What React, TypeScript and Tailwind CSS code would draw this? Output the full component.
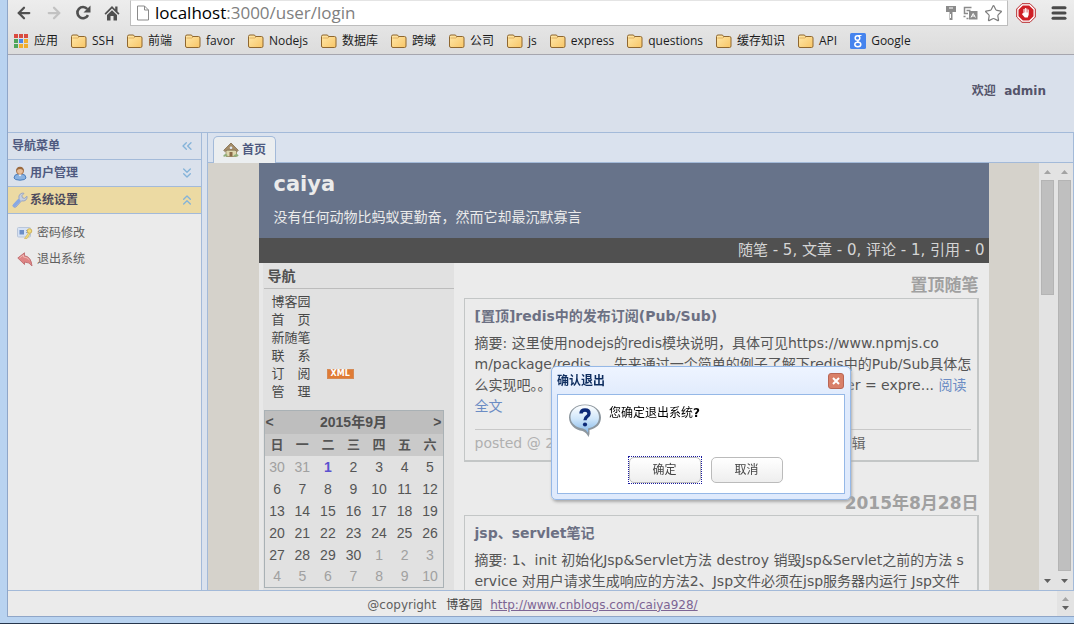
import type { ReactNode } from 'react'
import { ArrowLeft, ArrowRight, ChevronsDown, ChevronsLeft, ChevronsUp, Menu, Star } from 'lucide-react'

const bookmarks = ['SSH', '前端', 'favor', 'Nodejs', '数据库', '跨域', '公司', 'js', 'express', 'questions', '缓存知识', 'API']

const blogLinks = ['博客园', '首　页', '新随笔', '联　系', '订　阅', '管　理']

const weekdays = ['日', '一', '二', '三', '四', '五', '六']

// September 2015, padded with the neighbouring months
const weeks = [
    [30, 31, 1, 2, 3, 4, 5],
    [6, 7, 8, 9, 10, 11, 12],
    [13, 14, 15, 16, 17, 18, 19],
    [20, 21, 22, 23, 24, 25, 26],
    [27, 28, 29, 30, 1, 2, 3],
    [4, 5, 6, 7, 8, 9, 10],
]

function FolderIcon() {
    return (
        <svg width="16" height="14" viewBox="0 0 16 14" className="shrink-0">
            <defs>
                <linearGradient id="folder" x1="0" y1="0" x2="1" y2="1">
                    <stop offset="0" stopColor="#ffe9ab" />
                    <stop offset="1" stopColor="#f8c566" />
                </linearGradient>
            </defs>
            <path d="M.5 12V2.5Q.5 1 2 1h4.500l1 1.500H13.500Q15 2.500 15 4v8q0 1.500-1.500 1.500H2Q.5 13.500.5 12z" fill="url(#folder)" stroke="#8f672f" />
            <path d="M1.500 4h5.500l1-1" fill="none" stroke="#e0b060" />
        </svg>
    )
}

function AppsIcon() {
    const colors = ['#d94b3f', '#d94b3f', '#d94b3f', '#4fa65a', '#4a86e8', '#f0ae2e', '#4fa65a', '#f0ae2e', '#f0ae2e']
    return (
        <svg width="14" height="14" viewBox="0 0 14 14" className="shrink-0">
            {colors.map((c, i) => (
                <rect key={i} x={(i % 3) * 5} y={Math.floor(i / 3) * 5} width="4" height="4" fill={c} />
            ))}
        </svg>
    )
}

function ReloadIcon() {
    return (
        <svg width="17" height="16" viewBox="0 0 17 16">
            <path d="M13 10.200A5.600 5.600 0 1 1 12.300 4" fill="none" stroke="#505050" strokeWidth="2.600" />
            <path d="M15.500.5v7h-7z" fill="#505050" />
        </svg>
    )
}

function HomeIcon() {
    return (
        <svg width="16" height="16" viewBox="0 0 16 16" fill="#505050">
            <path d="M8 1 .5 8.500l1.200 1.200L8 3.600l6.300 6.100 1.200-1.200-2-2V1.500h-2.300v2.700z" />
            <path d="M3 10 8 5.200 13 10v5.500H9.500V11h-3v4.500H3z" />
        </svg>
    )
}

function PageIcon() {
    return (
        <svg width="12" height="16" viewBox="0 0 12 16">
            <path d="M.5 1h7l4 4v10H.5z" fill="#fff" stroke="#8a8a8a" />
            <path d="M7.500 1v4h4" fill="none" stroke="#8a8a8a" />
        </svg>
    )
}

function KeyIcon() {
    return (
        <svg width="12" height="16" viewBox="0 0 12 16">
            <path d="M1 1h10v6H7.500v8h-3V7H1z" fill="#8b8b8b" />
            <path d="M4 3h4M5.500 9v4" stroke="#fff" />
        </svg>
    )
}

function TranslateIcon() {
    return (
        <svg width="15" height="14" viewBox="0 0 15 14" fill="none" stroke="#8b8b8b">
            <path d="M8.500 1.500H1.500v6H5M3.500 4.500h4" strokeWidth="1.500" />
            <path d="M.5 10.500h2M3.500 12.500h2" strokeWidth="1.500" />
            <rect x="6.500" y="5.500" width="7.500" height="7.500" fill="#8b8b8b" />
            <path d="m8 11.500 2.200-4 2.200 4M9 10h2.600" stroke="#fff" />
        </svg>
    )
}

function AdblockIcon() {
    return (
        <svg width="20" height="20" viewBox="0 0 20 20">
            <path d="M6 .7h8L19.300 6v8L14 19.300H6L.7 14V6z" fill="#fff" stroke="#b8272b" />
            <path d="M6.800 2.500h6.400l4.300 4.300v6.400l-4.300 4.300H6.800l-4.300-4.300V6.800z" fill="#cf1f26" />
            <path d="M7.500 10V6h1v3.500h.4V5h1v4.500h.4V5.500h1v4h.4V6.500h1v5.200l-1 2.800H8.800L6 11.200l.6-1z" fill="#fff" />
        </svg>
    )
}

function GoogleIcon() {
    return (
        <svg width="16" height="16" viewBox="0 0 16 16" className="shrink-0">
            <rect width="16" height="16" rx="1.500" fill="#4684ee" />
            <circle cx="7.500" cy="5" r="2.300" fill="none" stroke="#fff" strokeWidth="1.500" />
            <ellipse cx="7.800" cy="11.500" rx="3" ry="2.200" fill="none" stroke="#fff" strokeWidth="1.500" />
            <path d="M8 2.500h3.500M8.500 7l-1 1.300 1.500 1.200" fill="none" stroke="#fff" strokeWidth="1.200" />
        </svg>
    )
}

function UserIcon() {
    return (
        <svg width="14" height="15" viewBox="0 0 14 15">
            <path d="M1 12q0-3.500 4-4h4q4 .5 4 4-.5 2-6 2.200Q1.500 14 1 12z" fill="#89b2e2" stroke="#4c7fbd" />
            <circle cx="7" cy="5" r="3.500" fill="#e8bd97" stroke="#a7744d" />
            <path d="M3.200 5Q3 1 7 .8 11 1 10.800 5 9.500 3 7 3T3.200 5z" fill="#9b6a3e" />
            <path d="m5.500 8.500 1.500 2 1.500-2z" fill="#fff" />
        </svg>
    )
}

function WrenchIcon() {
    return (
        <svg width="16" height="16" viewBox="0 0 16 16">
            <path d="M1 13.500 7 7q-.8-3.500 1.500-5.200Q10 .7 12 1.300L9.800 3.800l.7 2 2.200.6L15 4.200q.5 2-1 3.700-1.600 1.600-4.500 1L4 15q-1.500.8-2.500-.2Q.7 14 1 13.500z" fill="#c6d0e2" stroke="#9aa5c0" />
            <path d="m2.500 13.400 4.300-4.600" stroke="#88a8e2" strokeWidth="3.500" strokeLinecap="round" />
        </svg>
    )
}

function CardIcon() {
    return (
        <svg width="16" height="14" viewBox="0 0 16 14">
            <rect x=".5" y="1.500" width="13" height="9.500" rx="1" fill="#d6e2f4" stroke="#b9c6da" />
            <rect x="2.500" y="4" width="4.500" height="4.500" fill="#6c8fc8" />
            <path d="M9 4.500h3M9 6.500h3" stroke="#8fa4c6" />
            <circle cx="12.500" cy="5" r="2.300" fill="#f2dc7c" stroke="#d0b45a" />
            <path d="m11.500 7-4 5.500h2.500L13 8z" fill="#f2dc7c" stroke="#d0b45a" strokeWidth=".7" />
        </svg>
    )
}

function ExitIcon() {
    return (
        <svg width="16" height="15" viewBox="0 0 16 15">
            <path d="M.8 6 7.500.8v3Q14 4.500 15 14q-2.500-4-7.500-4v2.500z" fill="#df8484" stroke="#c27376" />
            <path d="m2.500 6 4-3v2q4 .3 6 3" fill="none" stroke="#efb4b0" />
        </svg>
    )
}

function HouseIcon() {
    return (
        <svg width="16" height="16" viewBox="0 0 16 16">
            <path d="M3 8h10.500v6.500H3z" fill="#ddd6ae" stroke="#a59a71" />
            <path d="M8 1 .8 8.300l1 1.200L4 8h8l2.200 1.500 1-1.200z" fill="#a58d68" stroke="#8c7a5e" />
            <path d="M6.500 14.500V10h3v4.500z" fill="#8a6a48" />
            <path d="M1 14.500q1-2.500 3-.5M11 14.500q2-2.500 4-.5" stroke="#8fae7c" strokeWidth="2" fill="none" />
            <circle cx="8" cy="5.800" r="1.300" fill="#dfe9f5" />
        </svg>
    )
}

function QuestionIcon() {
    return (
        <svg width="34" height="35" viewBox="0 0 34 35">
            <defs>
                <linearGradient id="bubble" x1="0" y1="0" x2="0" y2="1">
                    <stop offset="0" stopColor="#ffffff" />
                    <stop offset="0.5" stopColor="#cfe6fa" />
                    <stop offset="1" stopColor="#86b8e8" />
                </linearGradient>
            </defs>
            <path d="M17 1.500C7 1.500 1 7.500 1 14.500S7 27 14.500 28Q18.500 29.500 20.500 34q1.500-3.500 1-7c7-1.500 11.500-6 11.500-12.500C33 7.500 27 1.500 17 1.500z" fill="#8d979f" />
            <path d="M17 2.200C8 2.200 2.500 7.500 2.500 14s5.500 10.600 12.500 11.600q3.500.8 4.800 4.200.8-2 .2-4.400c7-1 11-5.300 11-11.300C31 7.500 26 2.200 17 2.200z" fill="url(#bubble)" />
            <path d="M13 10.500Q13 7 17 7t4 3.400q0 1.900-2 3.200T17 17.300" fill="none" stroke="#0d2a78" strokeWidth="3.400" />
            <circle cx="17" cy="21.500" r="2.100" fill="#0d2a78" />
        </svg>
    )
}

function ScrollArrow({ down }: { down?: boolean }) {
    return (
        <svg width="7" height="4" viewBox="0 0 7 4" className="shrink-0">
            <path d={down ? 'M0 0h7L3.500 4z' : 'M0 4h7L3.500 0z'} fill={down ? '#606060' : '#a3a3a3'} />
        </svg>
    )
}

function Scrollbar({ children }: { children?: ReactNode }) {
    return (
        <div className="flex w-[17px] shrink-0 flex-col items-center bg-[#e3e3e3] pt-[7px] pb-[7px]">
            <ScrollArrow />
            <div className="mt-1.5 mb-2 flex w-full flex-1 flex-col px-0.5">{children}</div>
            <ScrollArrow down />
        </div>
    )
}

function BrowserChrome() {
    return (
        <header className="shrink-0 border-b border-[#a6a6ae] bg-gradient-to-b from-[#ededed] to-[#dcdcdc] font-['Open_Sans','Noto_Sans_CJK_SC',sans-serif]">
            <div className="flex h-[26px] items-center">
                <div className="flex w-[122px] items-center gap-3 pl-[7px]">
                    <button aria-label="Back"><ArrowLeft className="h-[18px] w-[18px] text-[#505050]" strokeWidth={3} /></button>
                    <button aria-label="Forward"><ArrowRight className="h-[18px] w-[18px] text-[#c2c2c2]" strokeWidth={3} /></button>
                    <button aria-label="Reload"><ReloadIcon /></button>
                    <button aria-label="Home"><HomeIcon /></button>
                </div>
                <div className="flex h-full flex-1 items-center gap-1.5 border border-t-[#e4e4e4] border-[#bdbdbd] bg-white pr-1 pl-1.5">
                    <PageIcon />
                    <div className="flex-1 text-[17px] leading-6 text-[#808080]">
                        <span className="text-black">localhost</span>:3000/user/login
                    </div>
                    <KeyIcon />
                    <TranslateIcon />
                    <Star className="h-[19px] w-[19px] text-[#7d7d7d]" strokeWidth={1.5} />
                </div>
                <div className="flex items-center gap-3.5 pr-1.5 pl-2">
                    <button aria-label="AdBlock"><AdblockIcon /></button>
                    <button aria-label="Menu"><Menu className="h-[18px] w-[18px] text-[#4a4a4a]" strokeWidth={4} /></button>
                </div>
            </div>
            <nav className="flex h-7 items-center gap-[13px] pt-0.5 pl-1.5 text-[12px] leading-4 text-[#1c1c1c]">
                <a href="#" className="flex items-center gap-1.5"><AppsIcon />应用</a>
                {bookmarks.map((name) => (
                    <a key={name} href="#" className="flex items-center gap-[5px] whitespace-nowrap"><FolderIcon />{name}</a>
                ))}
                <a href="#" className="flex items-center gap-[5px]"><GoogleIcon />Google</a>
            </nav>
        </header>
    )
}

function Sidebar() {
    return (
        <aside className="flex w-[194px] shrink-0 flex-col border-r border-[#a3bad9] bg-[#ebebeb] text-[12px] leading-4">
            <div className="flex h-[27px] items-center justify-between border-b border-[#a3bad9] bg-[#dae1ec] pr-1.5 pl-1 font-bold text-[#4f5a80]">
                导航菜单
                <ChevronsLeft className="h-4 w-4 text-[#84b3d9]" strokeWidth={2} />
            </div>
            <button className="flex h-[27px] items-center border-b border-[#a3bad9] bg-[#dae1ec] pr-1.5 pl-[5px] text-left font-bold text-[#4f5a80]">
                <UserIcon />
                <span className="ml-[3px] flex-1">用户管理</span>
                <ChevronsDown className="h-4 w-4 text-[#84b3d9]" strokeWidth={2} />
            </button>
            <button className="flex h-[27px] items-center border-b border-[#a3bad9] bg-[#ecdaa3] pr-1.5 pl-1 text-left font-bold text-[#4c4a5c]">
                <WrenchIcon />
                <span className="ml-0.5 flex-1">系统设置</span>
                <ChevronsUp className="h-4 w-4 text-[#84b3d9]" strokeWidth={2} />
            </button>
            <ul className="pt-1.5 pl-[9px] text-[#606060]">
                <li><a href="#" className="flex h-[26px] items-center gap-1"><CardIcon />密码修改</a></li>
                <li><a href="#" className="flex h-[26px] items-center gap-1"><ExitIcon />退出系统</a></li>
            </ul>
        </aside>
    )
}

function Calendar() {
    return (
        <table className="mt-[9px] w-[180px] table-fixed border border-[#a9b1b5] text-center font-['Liberation_Sans','Noto_Sans_CJK_SC',sans-serif] text-[14px] leading-5 text-[#555]">
            <thead>
                <tr className="h-[23px] bg-[#bebebe] text-[#505050]">
                    <th className="pl-px text-left"><a href="#">&lt;</a></th>
                    <th colSpan={5}>2015年9月</th>
                    <th className="pr-px text-right"><a href="#">&gt;</a></th>
                </tr>
                <tr className="h-[22px] bg-[#cacaca] text-[13px]">
                    {weekdays.map((d) => <th key={d}>{d}</th>)}
                </tr>
            </thead>
            <tbody>
                {weeks.map((week, w) => (
                    <tr key={w} className="h-[22px]">
                        {week.map((day, i) => {
                            const other = (w === 0 && day > 7) || (w > 3 && day < 15)
                            const today = w === 0 && day === 1
                            return (
                                <td key={i} className={today ? 'font-bold text-[#5b51cf]' : other ? 'text-[#a0a0a0]' : ''}>{day}</td>
                            )
                        })}
                    </tr>
                ))}
            </tbody>
        </table>
    )
}

function Blog() {
    return (
        <div className="flex w-[730px] flex-col bg-[#ebebeb] text-[14px]">
            <div className="h-[75px] shrink-0 bg-[#67738a] px-[15px] pt-[5px] text-[#ebebeb]">
                <h1 className="text-[21px] leading-8 font-bold">caiya</h1>
                <p className="mt-[7px] leading-5">没有任何动物比蚂蚁更勤奋，然而它却最沉默寡言</p>
            </div>
            <div className="h-[25px] shrink-0 bg-[#505050] pr-1 text-right text-[15px] leading-[25px] text-[#d5d5d5]">
                随笔 - 5, 文章 - 0, 评论 - 1, 引用 - 0
            </div>
            <div className="flex min-h-0 flex-1">
                <div className="w-[195px] shrink-0 border-l-4 border-[#e8e8e8] bg-[#e1e1e1] pl-px">
                    <h2 className="h-[26px] border-b border-[#bcbcbc] pl-1 leading-[26px] font-bold text-[#505050]">导航</h2>
                    <ul className="mt-1 pl-2 text-[13px] text-[#484848]">
                        {blogLinks.map((name) => (
                            <li key={name} className="flex h-[18px] items-center gap-4">
                                <a href="#">{name}</a>
                                {name === '订　阅' && (
                                    <span className="border border-[#d58a55] bg-[#e07b35] px-[3px] text-[8px] leading-2 font-bold text-white">XML</span>
                                )}
                            </li>
                        ))}
                    </ul>
                    <Calendar />
                </div>
                <div className="min-w-0 flex-1 pr-2.5 pl-2.5 whitespace-nowrap text-[#555]">
                    <h2 className="h-[35px] pt-2.5 text-right text-[17px] leading-6 font-bold text-[#a0a0a0]">置顶随笔</h2>
                    <article className="h-[164px] border border-r-2 border-b-2 border-[#c3c6c6] pt-[5px] pr-1.5 pl-2.5">
                        <h3 className="leading-6 font-bold text-[#6c7083]">[置顶]redis中的发布订阅(Pub/Sub)</h3>
                        <div className="mt-[5px] leading-[21px]">
                            <p>摘要: 这里使用nodejs的redis模块说明，具体可见https://www.npmjs.co</p>
                            <p>m/package/redis 。 先来通过一个简单的例子了解下redis中的Pub/Sub具体怎</p>
                            <p className="flex justify-between pr-1">
                                <span>么实现吧。。</span>
                                <span>subscriber = expre... <a href="#" className="text-[#6b8cc4]">阅读</a></span>
                            </p>
                            <p><a href="#" className="text-[#6b8cc4]">全文</a></p>
                        </div>
                        <div className="mt-3 border-t border-[#c8c8c8]">
                            <p className="flex w-[391px] justify-between leading-[26px] text-[#b0b0b0]">
                                <span>posted @ 2015-09-01 10:24</span>
                                <a href="#" className="text-[#666]">编辑</a>
                            </p>
                        </div>
                    </article>
                    <h2 className="h-[53px] pt-[29px] text-right text-[17px] leading-6 font-bold text-[#a0a0a0]">2015年8月28日</h2>
                    <article className="h-[164px] border border-r-2 border-b-2 border-[#c3c6c6] pt-[5px] pr-1.5 pl-2.5">
                        <h3 className="leading-6 font-bold text-[#6c7083]">jsp、servlet笔记</h3>
                        <div className="mt-[5px] leading-[21px]">
                            <p>摘要: 1、init 初始化Jsp&amp;Servlet方法 destroy 销毁Jsp&amp;Servlet之前的方法 s</p>
                            <p>ervice 对用户请求生成响应的方法2、Jsp文件必须在jsp服务器内运行 Jsp文件</p>
                        </div>
                    </article>
                </div>
            </div>
        </div>
    )
}

function ConfirmDialog() {
    return (
        <div className="fixed inset-x-0 top-[366px] z-20 flex justify-center pl-[328px]">
            <div role="dialog" aria-labelledby="confirm-title" className="w-[300px] rounded-[5px] border border-[#95b8e7] bg-gradient-to-b from-[#eef4ff] to-[#dfeafc] to-25% p-[5px] pt-0 text-[12px] text-black shadow-[1px_2px_3px_#aaa]">
                <div className="flex h-[27px] items-center justify-between">
                    <h2 id="confirm-title" className="font-bold text-[#0e2d5f]">确认退出</h2>
                    <button aria-label="Close" className="mr-px flex h-4 w-4 items-center justify-center rounded-[3px] border border-[#b96655] bg-[#d98069]">
                        <svg width="8" height="8" viewBox="0 0 8 8"><path d="m1 1 6 6M7 1 1 7" stroke="#fff" strokeWidth="2" /></svg>
                    </button>
                </div>
                <div className="border border-[#95b8e7] bg-white px-2.5 pb-[9px]">
                    <div className="flex h-[61px] gap-[7px] pt-2">
                        <QuestionIcon />
                        <p className="leading-5">您确定退出系统<b>?</b></p>
                    </div>
                    <div className="flex items-center justify-center gap-[9px] pl-2">
                        <div className="border border-dotted border-[#1a1aa0]">
                            <button className="block h-[26px] w-[72px] rounded-[5px] border border-[#bbb] bg-gradient-to-b from-white to-[#eee] text-[#444]">确定</button>
                        </div>
                        <button className="h-[26px] w-[72px] rounded-[5px] border border-[#bbb] bg-gradient-to-b from-white to-[#eee] text-[#444]">取消</button>
                    </div>
                </div>
            </div>
        </div>
    )
}

export default function App() {
    return (
        <div className="flex h-screen flex-col overflow-hidden border-b border-[#26364c] bg-[#b9d3f0] pb-[6px] font-['DejaVu_Sans','Noto_Sans_CJK_SC',sans-serif]">
            <div className="ml-[7px] flex min-h-0 flex-1 flex-col border-b border-l border-[#8fa6c8]">
                <BrowserChrome />
                <div className="flex h-[77px] shrink-0 items-center justify-end bg-[#d9e0eb] pr-7 pb-1.5 text-[12px] font-bold text-[#54546a]">
                    欢迎&nbsp; admin
                </div>
                <div className="flex min-h-0 flex-1 border-t border-[#a3bad9] bg-[#dae2ee]">
                    <Sidebar />
                    <main className="ml-[5px] flex min-w-0 flex-1 flex-col border-x border-[#a3bad9]">
                        <div className="flex h-[30px] shrink-0 items-end border-b border-[#a3bad9] pl-[5px]">
                            <button className="-mb-px flex h-[27px] items-center gap-[3px] rounded-t-[5px] border border-b-0 border-[#a3bad9] bg-[#ebeef0] px-[9px] text-[12px] font-bold text-[#4f5a80]">
                                <HouseIcon />首页
                            </button>
                        </div>
                        <div className="flex min-h-0 flex-1 overflow-hidden bg-[#d5d2cb]">
                            <div className="flex min-w-0 flex-1 justify-center">
                                <Blog />
                            </div>
                            <Scrollbar><div className="h-[115px] border border-[#b4b4b4] bg-[#bfbfbf]" /></Scrollbar>
                            <Scrollbar><div className="flex-1 border border-[#b4b4b4] bg-[#bfbfbf]" /></Scrollbar>
                        </div>
                    </main>
                </div>
                <footer className="z-10 flex h-[26px] shrink-0 border-t border-[#a3bad9] bg-[#ebebeb] text-[12px] text-[#606060]">
                    <p className="flex flex-1 items-center justify-center pt-0.5">
                        @copyright<span className="ml-2.5 mr-2 text-[#444]">博客园</span>
                        <a href="http://www.cnblogs.com/caiya928/" className="text-[#7d6594] underline">http://www.cnblogs.com/caiya928/</a>
                    </p>
                    <div className="flex w-[17px] flex-col items-center justify-between bg-[#e3e3e3] py-1.5">
                        <ScrollArrow />
                        <ScrollArrow down />
                    </div>
                </footer>
            </div>
            <ConfirmDialog />
        </div>
    )
}
